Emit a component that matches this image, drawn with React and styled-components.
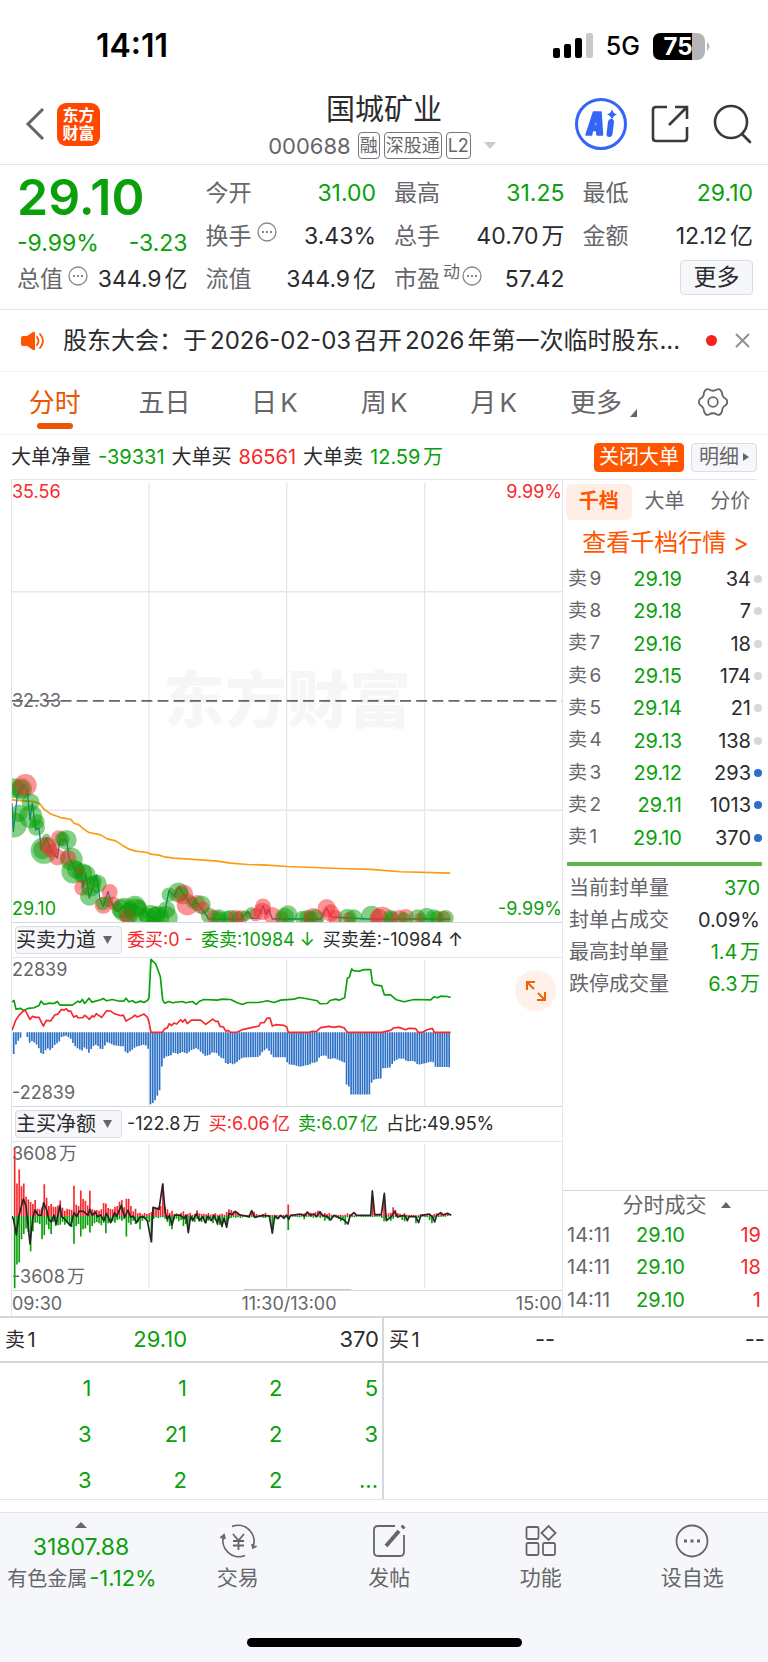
import React from 'react';
import styled, { createGlobalStyle } from 'styled-components';

const C = {
  green: '#0aa00a', red: '#f8282c', orange: '#ff5500', text: '#2b2b2d', sub: '#66666a',
  line: '#e4e6ee', strong: '#d4d7de', blue: '#2a71c5', soft: '#f6f7fa',
};

const Global = createGlobalStyle`
  *, *::before, *::after { box-sizing: border-box; }
  body { margin: 0; background: #fff; }
  body, button, select { font-family: Inter, "Noto Sans CJK SC", sans-serif; line-height: 1.3; color: ${C.text}; text-autospace: normal; }
  button { border: 0; padding: 0; background: none; cursor: pointer; }
  table { border-collapse: collapse; border-spacing: 0; }
  td, th { padding: 0; font-weight: 400; }
  h1, p, dl, dt, dd { margin: 0; font-weight: 400; }
  svg { display: block; }
`;

const Page = styled.div`min-width: 700px; background: #fff;`;
const tone = (p) => C[p.$tone] || C.text;
const Tone = styled.span`color: ${tone};`;

/* status bar */
const StatusBar = styled.div`
  height: 84px; padding: 8px 57px 0 96px; display: flex; align-items: center; justify-content: space-between; color: #000;
`;
const Clock = styled.time`font-size: 32px; font-weight: 600;`;
const Signals = styled.div`display: flex; align-items: center; gap: 13px; font-size: 25px; font-weight: 500;`;
const Battery = styled.div`
  display: grid; width: 58px; height: 27px; align-items: center;
  & > * { grid-area: 1 / 1; }
  span { width: 50px; text-align: center; color: #fff; font-size: 24px; line-height: 27px; font-weight: 700; }
`;

/* header */
const Header = styled.header`
  height: 81px; padding: 0 15px; border-bottom: 1px solid ${C.line};
  display: grid; grid-template-columns: 1fr auto 1fr; align-items: center;
`;
const HeadLeft = styled.div`display: flex; align-items: center; gap: 11px; padding-left: 9px;`;
const HeadRight = styled.div`display: flex; align-items: center; justify-content: flex-end; gap: 24px;`;
const Logo = styled.a`
  width: 43px; height: 43px; border-radius: 9px; background: #ff4700; color: #fff; text-decoration: none;
  font-size: 16px; line-height: 18px; font-weight: 700; display: grid; place-content: center; text-align: center;
`;
const TitleBlock = styled.div`display: grid; justify-items: center; padding-top: 1px;`;
const Title = styled.h1`font-size: 29px; line-height: 42px;`;
const CodeRow = styled.div`
  display: flex; align-items: center; gap: 4px; font-size: 22px; line-height: 30px; color: ${C.sub};
`;
const Code = styled.span`margin-right: 3px;`;
const Badge = styled.span`
  height: 27px; padding: 0 1px; border: 1px solid #77777b; border-radius: 4px; font-size: 18px; line-height: 25px;
`;
const DownMark = styled.svg`margin: 0 4px 0 9px;`;

/* quote */
const Quote = styled.section`
  height: 145px; padding: 7px 15px 0 17px; border-bottom: 1px solid ${C.line};
  display: grid; grid-template-columns: repeat(4, minmax(0, 1fr)); column-gap: 18px;
`;
const PriceCol = styled.div`display: flex; flex-direction: column;`;
const Price = styled.p`font-size: 50px; line-height: 50px; font-weight: 600; color: ${C.green};`;
const Change = styled.p`
  display: flex; justify-content: space-between; font-size: 23px; line-height: 43px; color: ${C.green};
`;
const StatCol = styled.dl``;
const Stat = styled.div`
  display: flex; justify-content: space-between; align-items: center; height: ${(p) => (p.$short ? 30 : 43)}px; font-size: 23px;
  dt { display: flex; align-items: center; gap: 5px; color: ${C.sub}; }
  dd { color: ${tone}; white-space: nowrap; }
  dt svg { margin-bottom: 8px; }
`;
const Sup = styled.span`font-size: 17px; margin: 0 -3px 14px -2px;`;
const MoreButton = styled.button`
  display: block; margin: 2px 0 0 auto; width: 73px; height: 35px; border: 1px solid #d9dde7; border-radius: 4px;
  background: ${C.soft}; font-size: 23px; line-height: 31px;
`;

/* notice */
const Notice = styled.section`
  height: 62px; padding: 0 18px 0 20px; border-bottom: 1px solid #f0f1f5; display: flex; align-items: center;
`;
const NoticeText = styled.p`margin: 0 12px 0 18px; flex: 1; min-width: 0; font-size: 24px; white-space: nowrap;`;
const RedDot = styled.i`width: 11px; height: 11px; border-radius: 50%; background: #fa2020; margin-right: 18px;`;

/* period tabs */
const Tabs = styled.nav`
  height: 63px; border-bottom: 1px solid #f0f1f5; display: grid; grid-template-columns: repeat(7, 1fr);
`;
const Tab = styled.button`
  display: flex; flex-direction: column; align-items: center; justify-content: flex-start; padding-top: 13px;
  font-size: 26px; line-height: 36px; color: ${(p) => (p.$active ? '#eb5505' : C.sub)};
  & > svg { margin-top: 2px; }
  &::after {
    content: ''; width: 36px; height: 6px; border-radius: 3px; margin-top: 2px; background: ${(p) => (p.$active ? '#eb5505' : 'transparent')};
  }
`;
const TabMore = styled.span`display: flex; align-items: flex-end; gap: 8px; svg { margin-bottom: 4px; }`;

/* large order strip */
const BigOrders = styled.section`
  height: 45px; margin: 0 11px; border-bottom: 1px solid ${C.line}; display: flex; align-items: center; gap: 7px;
`;
const BigText = styled.p`flex: 1; display: flex; gap: 7px; font-size: 20px; white-space: nowrap;`;
const SmallButton = styled.button`
  height: 29px; border-radius: 4px; font-size: 20px; line-height: 25px; display: flex; align-items: center; gap: 4px;
  border: 1px solid ${(p) => (p.$solid ? '#ff5500' : '#dadde6')}; padding: 0 ${(p) => (p.$solid ? 4 : 7)}px;
  background: ${(p) => (p.$solid ? '#ff5500' : C.soft)}; color: ${(p) => (p.$solid ? '#fff' : C.sub)};
`;

/* charts */
const Main = styled.main`display: flex; border-bottom: 2px solid ${C.strong};`;
const Charts = styled.div`
  flex: 1; min-width: 0; margin-left: 11px; border: solid ${C.line}; border-width: 0 1px;
`;
const Plot = styled.figure`
  position: relative; margin: 0; height: ${(p) => p.$h}px; border-bottom: 1px solid ${C.strong};
  & > svg { width: 100%; height: 100%; }
`;
const Corner = styled.span`
  position: absolute; font-size: 18px; line-height: 20px; color: ${tone};
  ${(p) => (p.$right ? 'right: 0;' : 'left: 0;')}
  ${(p) => (p.$bottom ? 'bottom: 3px;' : 'top: 2px;')}
`;
const BaseLabel = styled(Corner)`top: 50%; margin-top: -10px;`;
const Watermark = styled.span`
  position: absolute; inset: 0; display: grid; place-items: center; font-size: 62px; font-weight: 900; color: rgba(0, 0, 0, 0.035);
`;
const Indicator = styled.div`
  height: 35px; padding-left: 3px; border-bottom: 1px solid ${C.line}; display: flex; align-items: center; gap: 8px;
  font-size: 18px; white-space: nowrap;
`;
const Picker = styled.label`
  position: relative; display: block; width: 107px; height: 28px; margin-right: -3px;
  svg { position: absolute; right: 10px; top: 10px; pointer-events: none; }
`;
const Select = styled.select`
  appearance: none; display: block; width: 100%; height: 100%; padding: 0; border: 1px solid #dadde6; border-radius: 4px; background: ${C.soft};
  font-size: 20px; line-height: 24px;
`;
const Expand = styled.button`
  position: absolute; right: 6px; top: 12px; width: 41px; height: 41px; border-radius: 50%; background: #fff1ea;
  display: grid; place-items: center;
`;
const Axis = styled.div`
  height: 25px; display: flex; align-items: center; justify-content: space-between; font-size: 18px; color: ${C.sub};
`;

/* order book column */
const Side = styled.aside`width: 205px; display: flex; flex-direction: column;`;
const SideTabs = styled.div`height: 40px; padding: 4px 5px 0 3px; display: grid; grid-template-columns: repeat(3, 1fr);`;
const SideTab = styled.button`
  height: 36px; padding-bottom: 2px; border-radius: 6px; font-size: 20px; font-weight: ${(p) => (p.$active ? 700 : 400)};
  color: ${(p) => (p.$active ? C.orange : C.sub)}; background: ${(p) => (p.$active ? '#ffeee6' : 'transparent')};
`;
const DepthLink = styled.a`
  margin: 5px 0 2px; text-align: center; font-size: 24px; line-height: 36px; color: ${C.orange}; text-decoration: none; white-space: nowrap;
`;
const Book = styled.table`
  width: 100%; height: 291px; table-layout: fixed; font-size: 20px;
  td { text-align: right; }
  th { text-align: left; padding-left: 5px; color: ${C.sub}; font-size: 19px; }
  td:nth-child(2) { color: ${C.green}; }
`;
const Dot = styled.i`
  display: block; width: 8px; height: 8px; margin-left: 3px; border-radius: 50%; background: ${(p) => (p.$on ? C.blue : '#d5d8de')};
`;
const Divider = styled.hr`width: 195px; height: 4px; margin: 8px 0 6px 4px; border: 0; background: #5bb947;`;
const Seal = styled.dl`padding: 0 8px 0 6px; flex: 1;`;
const SealRow = styled.div`
  height: 32px; display: flex; align-items: center; justify-content: space-between; font-size: 20px;
  dt { color: ${C.sub}; } dd { color: ${tone}; }
`;
const TradesHead = styled.button`
  height: 29px; border-top: 1px solid ${C.strong}; display: flex; justify-content: center; align-items: center; gap: 14px;
  padding-left: 22px; font-size: 21px; line-height: 28px; color: ${C.sub};
`;
const Trades = styled.table`
  width: 100%; height: 97px; table-layout: fixed; font-size: 20px;
  td { text-align: right; }
  td:first-child { text-align: left; padding-left: 4px; color: ${C.sub}; }
  td:nth-child(2) { color: ${C.green}; }
  td:last-child { padding-right: 7px; color: ${C.red}; }
`;

/* queue */
const Queues = styled.section`display: grid; grid-template-columns: 1fr 1fr; border-bottom: 1px solid ${C.line}; margin-bottom: 12px;`;
const Queue = styled.div`border-right: ${(p) => (p.$split ? `2px solid ${C.strong}` : '0')}; height: 181px;`;
const QueueHead = styled.div`
  height: 45px; padding: 0 3px 0 5px; border-bottom: 2px solid ${C.strong};
  display: grid; grid-template-columns: minmax(0, 24fr) minmax(0, 35fr) minmax(0, 41fr); align-items: center;
  font-size: 22px;
  & > :nth-child(1) { font-size: 20px; }
  & > :nth-child(2) { text-align: center; }
  & > :nth-child(3) { text-align: right; }
`;
const QueueTable = styled.table`
  width: 100%; table-layout: fixed; margin-top: 2px; font-size: 22px; color: ${C.green};
  tr { height: 46px; } td { text-align: right; padding-right: 4px; }
`;

/* bottom bar */
const BottomBar = styled.footer`background: ${C.soft}; border-top: 1px solid ${C.line}; height: 150px; display: flex; flex-direction: column;`;
const BottomRow = styled.div`display: grid; grid-template-columns: 162px repeat(4, 1fr); height: 84px;`;
const IndexBox = styled.button`
  display: flex; flex-direction: column; align-items: center; padding-top: 9px; font-size: 20px; line-height: 30px; color: ${C.sub}; white-space: nowrap;
  strong { font-weight: 400; font-size: 23px; line-height: 32px; margin-top: 3px; color: ${C.green}; }
  span { padding-left: 2px; }
  span span { font-size: 22px; }
`;
const NavItem = styled.button`
  display: flex; flex-direction: column; align-items: center; padding-top: 10px; gap: 3px; font-size: 21px; line-height: 32px; color: ${C.sub};
`;
const HomeBar = styled.i`width: 275px; height: 9px; border-radius: 5px; background: #000; margin: auto auto 15px;`;

const BackIcon = () => (
  <svg width="22" height="32" viewBox="0 0 22 32" fill="none" stroke="#66666a" strokeWidth="3"><path d="M19 1 4 16l15 15" /></svg>
);
const AiIcon = () => (
  <svg width="52" height="52" viewBox="0 0 52 52">
    <circle cx="26" cy="26" r="24.500" fill="none" stroke="#3565f6" strokeWidth="3" />
    <path d="M11 37 18.500 14H26L27.500 37H22L21.500 32.500H17.500L16.500 37ZM19 27.500H22L21.800 20Z" fill="#3565f6" stroke="#3565f6" strokeWidth="1.500" strokeLinejoin="round" />
    <path d="m36 24-1.500 12" stroke="#3565f6" strokeWidth="6" strokeLinecap="round" />
    <path d="M37 11q1 4.500 5 5.500-4 1-5 5.500-1-4.500-5-5.500 4-1 5-5.500Z" fill="#3565f6" />
  </svg>
);
const ShareIcon = () => (
  <svg width="38" height="38" viewBox="0 0 38 38" fill="none" stroke="#3a3a3d" strokeWidth="2.600">
    <path d="M16 2H5Q2 2 2 5v28q0 3 3 3h28q3 0 3-3V22" /><path d="M18 20 35 3M24 2h12v12" />
  </svg>
);
const SearchIcon = () => (
  <svg width="40" height="40" viewBox="0 0 40 40" fill="none" stroke="#3a3a3d" strokeWidth="2.600" strokeLinecap="round">
    <circle cx="18" cy="18" r="16" /><path d="m29 30 8 8" />
  </svg>
);
const Hint = () => (
  <svg width="20" height="20" viewBox="0 0 20 20"><circle cx="10" cy="10" r="9" fill="none" stroke="#85858a" strokeWidth="1.300" />
    <path d="M5 10h2M9 10h2M13 10h2" stroke="#85858a" strokeWidth="1.800" /></svg>
);
const HornIcon = () => (
  <svg width="25" height="20" viewBox="0 0 25 20">
    <path d="M3 5h4l6-4q2-1 2 1v16q0 2-2 1l-6-4H3q-2 0-2-2V7q0-2 2-2Z" fill="#ff5500" />
    <path d="M17 6q3 4 0 8M20 3q6 7 0 14" fill="none" stroke="#ff5500" strokeWidth="1.800" strokeLinecap="round" />
  </svg>
);
const CloseIcon = () => (
  <svg width="15" height="15" viewBox="0 0 15 15" stroke="#929296" strokeWidth="2"><path d="m1 1 13 13M14 1 1 14" /></svg>
);
const GearIcon = () => (
  <svg width="30" height="30" viewBox="0 0 30 30" fill="none" stroke="#66666a" strokeWidth="1.800" strokeLinejoin="round">
    <path d="M7.500 3Q9 1.500 11 2.500Q15 5 19 2.500Q21 1.500 22.500 3.200L24 5.500Q24 10 28 12Q29.500 13.500 29 15Q29.500 16.500 28 18Q24 20 24 24.500L22.500 27Q21 28.500 19 27.500Q15 25 11 27.500Q9 28.500 7.500 27L6 24.500Q6 20 2 18Q.7 16.500 1 15Q.7 13.500 2 12Q6 10 6 5.500Z" />
    <circle cx="15" cy="15" r="4.800" />
  </svg>
);
const Triangle = ({ d = 'M0 0h9L4.500 8Z', w = 9, h = 8, fill = '#66666a' }) => (
  <svg width={w} height={h} viewBox={`0 0 ${w} ${h}`}><path d={d} fill={fill} /></svg>
);
const navIcons = {
  trade: (<><path d="M11 2.500A16 16 0 0 1 32 23M24 31.500A16 16 0 0 1 3 11" /><path d="M-.5 14 3 11l1 4M35.500 22l-3.500 2-1-4" /><path d="m12 10 5.500 6.500L23 10M17.500 16.500V26M12 17h11M12 21.500h11" /></>),
  post: (<><path d="M23 2H6Q2 2 2 6v22q0 4 4 4h22q4 0 4-4V11" /><path d="M14 22 27 7" strokeWidth="4" /><path d="m30 4 2-2" strokeWidth="4" /></>),
  tools: (<><rect x="2.500" y="3" width="12" height="12" rx="1.500" /><path d="m24.500 2 7 7-7 7-7-7Z" /><rect x="2.500" y="19" width="12" height="12" rx="1.500" /><rect x="19" y="19" width="12" height="12" rx="1.500" /></>),
  watch: (<><circle cx="17" cy="17" r="15.500" /><path d="M9 17h3M15.500 17h3M22 17h3" strokeWidth="3" /></>),
};

/* chart data, in plot units of a third of a pixel */
const points = (s) => s.trim().split(/\s+/).map((p) => p.split(',').map(Number));
const average = '34,990 100,995 118,1002 130,1018 150,1032 180,1043 210,1048 220,1060 235,1065 248,1077 265,1088 300,1095 320,1107 345,1113 365,1126 385,1138 405,1144 440,1148 450,1153 475,1156 490,1161 520,1165 600,1170 650,1174 690,1180 740,1184 800,1186 860,1190 960,1194 1040,1197 1110,1199 1200,1206 1349,1210';
const price = '34,1000 38,1085 50,975 70,945 80,965 88,1050 95,1000 105,1080 115,1075 122,1140 137,1105 150,1140 170,1165 178,1110 198,1110 205,1165 215,1180 232,1225 240,1200 247,1255 255,1210 266,1285 287,1215 298,1290 308,1310 322,1265 330,1295 350,1325 370,1310 385,1340 400,1305 440,1330 460,1350 490,1340 505,1262 520,1280 535,1250 550,1275 570,1305 590,1300 605,1320 625,1348 720,1348 742,1325 752,1346 770,1346 787,1308 797,1335 805,1320 815,1348 960,1348 978,1315 992,1342 1100,1348 1349,1348';
const bubbles = points(`0,40,955,30 0,62,957,32 0,60,957,28 1,74,946,34 0,90,998,27 0,40,1065,38 0,55,1030,26 0,90,1040,35 0,110,1055,22 0,108,1073,25 0,130,1142,40 0,125,1140,28
 0,137,1105,13 1,140,1127,26 1,152,1142,22 1,170,1162,25 1,175,1105,24 0,185,1108,22 0,198,1110,30 0,212,1168,34 1,203,1165,24 0,218,1205,36 0,225,1200,26 0,245,1210,30
 1,238,1203,14 0,255,1215,30 1,245,1254,24 0,266,1280,28 0,270,1250,30 0,290,1242,28 0,283,1235,20 1,308,1306,26 0,306,1302,20 1,327,1267,24 0,322,1295,16 1,338,1300,20
 1,350,1312,16 0,372,1320,36 0,362,1318,30 0,385,1330,32 0,403,1310,32 1,382,1340,24 0,405,1322,36 0,415,1315,24 0,450,1340,34 0,470,1345,36 0,495,1345,36 0,498,1320,26
 0,440,1340,26 0,465,1340,28 0,505,1275,22 0,533,1268,30 1,548,1274,30 0,543,1272,22 1,560,1305,32 0,575,1298,18 1,590,1300,24 0,602,1305,28 1,607,1315,20 0,625,1338,24 1,640,1342,22
 0,655,1345,26 0,655,1345,20 0,690,1345,24 0,680,1345,22 1,705,1345,24 0,712,1345,20 1,722,1342,20 0,735,1338,16 0,752,1330,18 1,765,1335,20 1,787,1310,24 1,785,1325,26
 1,815,1338,26 1,845,1345,20 0,852,1342,28 0,862,1335,28 0,905,1345,22 0,920,1345,24 0,930,1345,22 1,938,1345,30 0,945,1345,26 1,978,1315,27 1,990,1330,26 1,1003,1342,22
 0,1040,1345,28 1,1045,1345,18 0,1060,1345,26 0,1113,1340,32 1,1135,1345,28 1,1145,1345,34 0,1170,1345,24 0,1175,1345,20 1,1195,1345,24 1,1216,1342,24 0,1210,1345,18
 0,1250,1345,26 1,1258,1345,16 0,1278,1342,28 0,1300,1345,26 0,1310,1345,22 1,1328,1345,22 0,1335,1345,24`);
const sellForce = '34,245 40,240 46,266 60,264 68,270 82,264 100,262 115,255 121,242 130,252 145,248 160,249 170,243 178,254 215,254 232,242 238,246 245,237 252,249 265,233 274,245 300,238 308,234 318,241 335,237 350,241 370,242 376,233 384,244 395,241 405,247 420,242 430,246 440,240 445,232 451,116 465,130 479,168 486,238 492,248 505,243 515,247 545,243 555,247 575,243 587,252 595,243 610,237 650,239 665,236 690,237 710,247 725,252 740,246 775,246 800,241 820,246 840,239 880,236 897,231 930,237 950,241 958,250 980,249 988,240 1005,236 1015,239 1032,232 1040,173 1046,170 1053,145 1058,150 1075,152 1090,147 1110,147 1115,185 1122,193 1143,196 1151,223 1170,223 1187,238 1210,244 1240,237 1290,238 1300,229 1310,232 1320,227 1340,228 1350,231';
const buyForce = '34,330 45,300 55,285 70,270 75,272 88,297 95,288 105,291 115,291 128,317 137,300 150,302 162,284 172,281 182,267 190,269 197,265 203,272 210,272 219,290 228,286 232,292 246,292 252,285 258,289 266,297 275,286 280,290 287,280 303,291 318,271 330,272 340,279 360,286 368,284 376,302 395,291 403,284 410,290 430,281 440,290 445,305 451,336 485,336 492,326 500,322 506,310 512,316 520,308 528,311 540,298 546,305 553,297 560,310 572,299 600,299 615,312 636,296 645,303 652,303 658,318 668,320 676,333 682,330 690,336 710,335 725,328 775,317 780,307 790,307 800,293 808,293 815,317 825,313 850,315 858,320 863,336 925,336 935,333 947,334 960,322 985,318 1000,321 1015,318 1030,322 1040,336 1143,336 1170,330 1178,323 1195,321 1215,328 1225,324 1245,325 1253,336 1265,336 1280,328 1295,324 1301,336 1350,336';
const gapBars = points('38,408 42,380 50,365 60,352 66,336 74,336 82,355 88,370 95,360 110,375 122,400 130,402 138,382 150,390 162,374 175,365 182,350 197,346 212,357 220,375 232,385 246,392 253,378 266,400 274,380 288,372 303,390 320,365 340,375 360,378 370,378 376,402 390,392 405,380 412,378 430,373 440,378 446,395 449,553 458,548 465,538 473,520 480,503 484,432 492,410 500,408 512,405 520,395 530,402 545,395 560,400 570,390 588,383 600,395 615,408 628,403 636,395 650,400 658,412 670,415 677,433 690,428 697,433 710,425 725,412 775,410 785,395 800,383 810,400 818,411 855,411 862,433 880,434 897,440 925,434 935,428 947,428 958,408 975,405 985,418 1000,413 1015,420 1033,428 1038,498 1049,500 1051,523 1111,523 1113,485 1122,477 1144,475 1146,444 1170,442 1177,425 1195,415 1210,416 1218,423 1240,422 1252,434 1270,430 1297,423 1300,440 1350,441');
const valueAt = (list, x) => {
  const i = list.findIndex((p) => p[0] >= x);
  if (i <= 0) return list[i < 0 ? list.length - 1 : 0][1];
  const [a, b] = [list[i - 1], list[i]];
  return a[1] + ((b[1] - a[1]) * (x - a[0])) / (b[0] - a[0]);
};
const STEP = 6.84;
const gapPath = Array.from({ length: 192 }, (_, i) => 39 + i * STEP).map((x) => `M${x} 336V${valueAt(gapBars, x)}`).join('');

const inflow = [204, 98, 140, 90, 98, 58, 50, 42, 36, 48, 22, 20, 26, 96, 55, 30, 36, 28, 28, 32, 47, 25, 16, 22, 20, 18, 91, 35, 30, 77, 51, 46, 32, 76, 20, 18, 18, 16, 20, 39, 38, 24, 22, 20, 28, 30, 43, 48, 26, 52, 52, 30, 14, 22, 8, 10, 5, 9, 6, 8, 12, 22, 20, 28, 30, 98, 26, 20, 10, 16, 6, 8, 6, 10, 14, 4, 7, 10, 4, 6, 17, 8, 6, 7, 5, 9, 4, 6, 8, 4, 5, 7, 4, 12, 20, 18, 14, 12, 8, 6, 4, 4, 3, 4, 8, 13, 6, 4, 2, 6, 10, 4, 3, 3, 4, 3, 2, 3, 4, 3, 35, 2, 3, 4, 6, 5, 4, 8, 9, 6, 10, 8, 12, 16, 8, 7, 9, 6, 9, 4, 3, 4, 3, 4, 2, 4, 8, 5, 3, 2, 2, 3, 4, 3, 2, 2, 2, 58, 4, 3, 3, 4, 62, 4, 8, 10, 26, 18, 9, 7, 4, 8, 4, 3, 4, 3, 2, 2, 5, 6, 3, 4, 2, 3, 6, 8, 5, 7, 6, 9, 6];
const outflow = [218, 146, 140, 70, 54, 38, 48, 106, 46, 20, 20, 24, 70, 58, 26, 40, 54, 18, 30, 28, 26, 18, 26, 22, 30, 34, 84, 30, 24, 62, 40, 38, 28, 50, 30, 22, 18, 22, 28, 20, 52, 22, 12, 16, 20, 12, 10, 14, 10, 62, 20, 26, 14, 24, 18, 40, 14, 8, 8, 18, 80, 8, 4, 6, 4, 4, 8, 18, 30, 40, 10, 8, 16, 12, 30, 24, 46, 14, 10, 18, 8, 12, 18, 8, 22, 14, 6, 22, 12, 28, 26, 34, 18, 28, 8, 6, 4, 5, 4, 6, 4, 2, 4, 6, 3, 4, 5, 3, 4, 5, 6, 3, 5, 44, 12, 8, 4, 3, 6, 4, 42, 3, 2, 2, 3, 4, 2, 10, 2, 2, 3, 5, 4, 2, 6, 4, 14, 8, 14, 6, 4, 5, 8, 16, 10, 26, 4, 2, 3, 4, 2, 1, 2, 2, 2, 2, 2, 3, 2, 2, 2, 6, 16, 10, 4, 14, 8, 3, 6, 4, 12, 16, 4, 2, 3, 4, 22, 6, 3, 2, 3, 4, 12, 22, 5, 2, 3, 2, 2, 2];
const flowPath = (list, sign) => list.map((v, i) => `M${42 + i * STEP} 348v${sign * v}`).join('');
const netFlow = '34,348 39,360 47,405 54,350 68,297 76,318 88,432 97,350 103,330 112,345 122,346 129,308 138,330 144,358 152,366 160,345 166,372 178,316 183,350 192,357 210,378 220,338 228,350 236,333 248,334 262,346 267,328 275,346 284,336 290,350 300,345 310,362 317,340 330,368 342,338 348,350 362,316 372,352 382,330 390,352 398,348 408,368 417,352 428,350 440,362 452,425 457,322 475,328 486,252 494,340 500,358 506,346 514,375 522,345 540,346 550,356 556,345 563,398 570,348 576,362 588,340 596,362 606,350 614,368 622,348 632,362 640,346 650,370 655,350 664,378 670,355 678,382 685,340 694,344 704,334 718,345 745,350 753,332 762,352 785,346 806,348 815,400 822,348 832,356 840,346 850,355 858,345 864,358 870,346 900,342 912,348 920,336 930,346 940,342 948,350 958,335 965,346 980,350 990,360 1000,346 1030,360 1042,372 1048,348 1060,338 1068,346 1110,346 1115,272 1122,344 1142,344 1151,280 1157,362 1172,350 1182,334 1190,350 1212,346 1220,362 1225,350 1245,350 1254,368 1260,347 1285,342 1295,350 1302,366 1308,346 1320,338 1328,345 1340,340 1352,346';

const VLines = ({ y1, y2 }) => (
  <path d={`M445 ${y1}V${y2}M858 ${y1}V${y2}M1272 ${y1}V${y2}`} stroke="#e4e7f0" strokeWidth="4" fill="none" />
);
const Line = ({ pts, color, w = 5 }) => (
  <polyline points={pts} fill="none" stroke={color} strokeWidth={w} strokeLinejoin="round" />
);

const stats = [
  [['今开', '31.00', 'green'], ['换手', '3.43%', '', 1], ['流值', '344.9亿', '']],
  [['最高', '31.25', 'green'], ['总手', '40.70万', ''], ['市盈', '57.42', '', 1, '动']],
  [['最低', '29.10', 'green'], ['金额', '12.12亿', '']],
];
const StatItem = ({ item: [label, value, t, hint, sup], short }) => (
  <Stat $tone={t} $short={short}><dt>{label}{sup && <Sup>{sup}</Sup>}{hint && <Hint />}</dt><dd>{value}</dd></Stat>
);
const asks = [['9', '29.19', 34], ['8', '29.18', 7], ['7', '29.16', 18], ['6', '29.15', 174], ['5', '29.14', 21], ['4', '29.13', 138], ['3', '29.12', 293], ['2', '29.11', 1013], ['1', '29.10', 370]];
const seals = [['当前封单量', '370', 'green'], ['封单占成交', '0.09%', ''], ['最高封单量', '1.4万', 'green'], ['跌停成交量', '6.3万', 'green']];
const IndicatorPicker = ({ name }) => (
  <Picker><Select aria-label="指标" defaultValue={name}><option>{name}</option></Select><Triangle /></Picker>
);

export default function App() {
  return (
    <Page>
      <Global />
      <StatusBar>
        <Clock>14:11</Clock>
        <Signals>
          <svg width="40" height="26" viewBox="0 0 40 26"><rect y="15" width="7" height="10" rx="2" /><rect x="11" y="11" width="7" height="14" rx="2" /><rect x="22" y="5" width="7" height="20" rx="2" /><rect x="33" width="7" height="25" rx="2" fill="#c9c9c9" /></svg>
          <span>5G</span>
          <Battery>
            <svg width="58" height="27" viewBox="0 0 58 27"><rect width="52" height="27" rx="8" fill="#b5b5b7" /><path d="M8 0h31v27H8q-8 0-8-8V8q0-8 8-8Z" /><path d="M54 9q5 4 0 9Z" fill="#b5b5b7" /></svg>
            <span>75</span>
          </Battery>
        </Signals>
      </StatusBar>

      <Header>
        <HeadLeft><button aria-label="返回"><BackIcon /></button><Logo href="#home">东方<br />财富</Logo></HeadLeft>
        <TitleBlock>
          <Title>国城矿业</Title>
          <CodeRow><Code>000688</Code><Badge>融</Badge><Badge>深股通</Badge><Badge>L2</Badge><DownMark width="12" height="7"><path d="M0 0h12L6 7Z" fill="#cacacc" /></DownMark></CodeRow>
        </TitleBlock>
        <HeadRight>
          <button aria-label="智能助手"><AiIcon /></button><button aria-label="分享"><ShareIcon /></button><button aria-label="搜索"><SearchIcon /></button>
        </HeadRight>
      </Header>

      <Quote>
        <PriceCol>
          <Price>29.10</Price>
          <Change><span>-9.99%</span><span>-3.23</span></Change>
          <dl><StatItem item={['总值', '344.9亿', '', 1]} short /></dl>
        </PriceCol>
        {stats.map((col, i) => (
          <div key={i}>
            <StatCol>{col.map((s) => <StatItem key={s[0]} item={s} />)}</StatCol>
            {i === 2 && <MoreButton>更多</MoreButton>}
          </div>
        ))}
      </Quote>

      <Notice>
        <HornIcon />
        <NoticeText>股东大会：于2026-02-03召开2026年第一次临时股东...</NoticeText>
        <RedDot /><button aria-label="关闭"><CloseIcon /></button>
      </Notice>

      <Tabs>
        <Tab $active>分时</Tab><Tab>五日</Tab><Tab>日K</Tab><Tab>周K</Tab><Tab>月K</Tab>
        <Tab><TabMore>更多<Triangle w={7} h={8} d="M7 0v8H0Z" /></TabMore></Tab>
        <Tab aria-label="设置"><GearIcon /></Tab>
      </Tabs>

      <BigOrders>
        <BigText>
          <span>大单净量</span><Tone $tone="green">-39331</Tone><span>大单买</span><Tone $tone="red">86561</Tone><span>大单卖</span><Tone $tone="green">12.59万</Tone>
        </BigText>
        <SmallButton $solid>关闭大单</SmallButton>
        <SmallButton>明细<Triangle w={6} h={8} d="M0 0 6 4 0 8Z" /></SmallButton>
      </BigOrders>

      <Main>
        <Charts>
          <Plot $h={443}>
            <Watermark>东方财富</Watermark>
            <svg viewBox="34 28 1650 1329" preserveAspectRatio="none">
              <VLines y1={36} y2={1357} />
              <path d="M34 364H1684M34 1021H1684" stroke="#e4e7f0" strokeWidth="4" />
              <path d="M34 692H1684" stroke="#66666a" strokeWidth="5" strokeDasharray="33 15.500" />
              <Line pts={average} color="#ff9a10" />
              <Line pts={price} color={C.blue} w={4} />
              {bubbles.map(([red, x, y, r], i) => <circle key={i} cx={x} cy={y} r={r} fill={red ? '#f52a30' : '#08a008'} opacity="0.5" />)}
            </svg>
            <Corner $tone="red">35.56</Corner><Corner $tone="red" $right>9.99%</Corner>
            <BaseLabel $tone="sub">32.33</BaseLabel>
            <Corner $tone="green" $bottom>29.10</Corner><Corner $tone="green" $right $bottom>-9.99%</Corner>
          </Plot>
          <Indicator>
            <IndicatorPicker name="买卖力道" />
            <Tone $tone="red">委买:0 -</Tone><Tone $tone="green">委卖:10984 ↓</Tone><span>买卖差:-10984 ↑</span>
          </Indicator>
          <Plot $h={149}>
            <svg viewBox="34 112 1650 446" preserveAspectRatio="none">
              <VLines y1={118} y2={558} />
              <path d={gapPath} stroke={C.blue} strokeWidth="5" />
              <Line pts={sellForce} color={C.green} /><Line pts={buyForce} color={C.red} />
            </svg>
            <Corner $tone="sub">22839</Corner><Corner $tone="sub" $bottom>-22839</Corner>
            <Expand aria-label="全屏">
              <svg width="22" height="22" viewBox="0 0 22 22" fill="none" stroke="#f2600c" strokeWidth="2"><path d="M2 10V2h8M2 2l7 7M20 12v8h-8M20 20l-7-7" /></svg>
            </Expand>
          </Plot>
          <Indicator>
            <IndicatorPicker name="主买净额" />
            <span>-122.8万</span><Tone $tone="red">买:6.06亿</Tone><Tone $tone="green">卖:6.07亿</Tone><span>占比:49.95%</span>
          </Indicator>
          <Plot $h={149}>
            <Corner $tone="sub">3608万</Corner><Corner $tone="sub" $bottom>-3608万</Corner>
            <svg viewBox="34 125 1650 446" preserveAspectRatio="none">
              <VLines y1={130} y2={565} />
              <path d={flowPath(inflow, -1)} stroke={C.red} strokeWidth="5" />
              <path d={flowPath(outflow, 1)} stroke={C.green} strokeWidth="5" />
              <Line pts={netFlow} color="#262628" />
              <path d="M730 570H1052" stroke="#c4c6ce" strokeWidth="4" />
            </svg>
          </Plot>
          <Axis><span>09:30</span><span>11:30/13:00</span><span>15:00</span></Axis>
        </Charts>

        <Side>
          <SideTabs><SideTab $active>千档</SideTab><SideTab>大单</SideTab><SideTab>分价</SideTab></SideTabs>
          <DepthLink href="#depth">查看千档行情 &gt;</DepthLink>
          <Book>
            <colgroup><col width="58" /><col width="61" /><col width="69" /><col /></colgroup>
            <tbody>{asks.map(([n, p, q], i) => <tr key={n}><th scope="row">卖{n}</th><td>{p}</td><td>{q}</td><td><Dot $on={i > 5} /></td></tr>)}</tbody>
          </Book>
          <Divider />
          <Seal>{seals.map(([k, v, t]) => <SealRow key={k} $tone={t}><dt>{k}</dt><dd>{v}</dd></SealRow>)}</Seal>
          <TradesHead>分时成交<Triangle w={10} h={6} d="M0 6h10L5 0Z" /></TradesHead>
          <Trades>
            <colgroup><col width="62" /><col width="60" /><col /></colgroup>
            <tbody>{['19', '18', '1'].map((q) => <tr key={q}><td>14:11</td><td>29.10</td><td>{q}</td></tr>)}</tbody>
          </Trades>
        </Side>
      </Main>

      <Queues>
        <Queue $split>
          <QueueHead><span>卖1</span><Tone $tone="green">29.10</Tone><span>370</span></QueueHead>
          <QueueTable><tbody>
            {[['1', '1', '2', '5'], ['3', '21', '2', '3'], ['3', '2', '2', '...']].map((r, i) => <tr key={i}>{r.map((v, j) => <td key={j}>{v}</td>)}</tr>)}
          </tbody></QueueTable>
        </Queue>
        <Queue><QueueHead><span>买1</span><span>--</span><span>--</span></QueueHead></Queue>
      </Queues>

      <BottomBar>
        <BottomRow>
          <IndexBox><Triangle w={12} h={6} d="M0 6h12L6 0Z" /><strong>31807.88</strong><span>有色金属<Tone $tone="green">-1.12%</Tone></span></IndexBox>
          {[['trade', '交易'], ['post', '发帖'], ['tools', '功能'], ['watch', '设自选']].map(([k, t]) => (
            <NavItem key={k}><svg width="38" height="36" viewBox="-2 -1 38 36" fill="none" stroke="#66666a" strokeWidth="1.800">{navIcons[k]}</svg>{t}</NavItem>
          ))}
        </BottomRow>
        <HomeBar />
      </BottomBar>
    </Page>
  );
}
